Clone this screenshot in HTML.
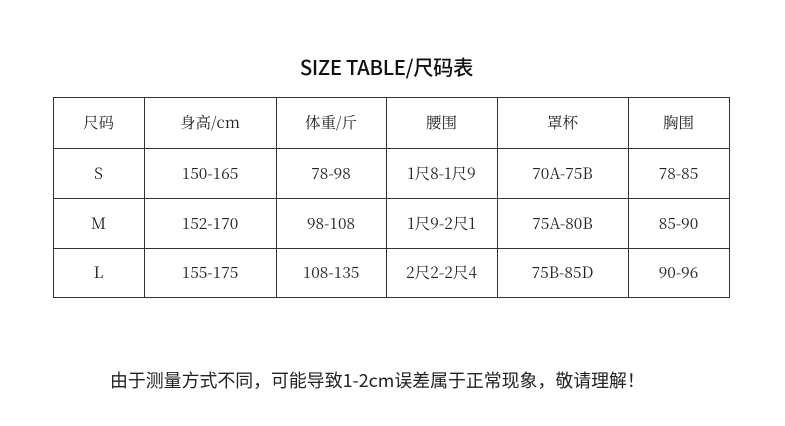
<!DOCTYPE html><html><head><meta charset="utf-8"><style>
body{margin:0;width:785px;height:426px;background:#fff;position:relative;overflow:hidden}
.t{position:absolute;top:51px;left:-6px;width:785px;text-align:center;font:500 20.3px "Noto Sans CJK SC",sans-serif;color:#111;letter-spacing:-0.3px}
.h{position:absolute;background:#333}
.c{position:absolute;text-align:center;font:15.5px "Noto Serif CJK SC",serif;color:#222}
.f{position:absolute;left:110px;top:367px;font:17.9px "Noto Sans CJK SC",sans-serif;color:#222;line-height:26px}
</style></head><body>
<div class="t">SIZE TABLE/尺码表</div>
<div class="h" style="left:53px;top:97px;width:677px;height:1px"></div>
<div class="h" style="left:53px;top:148px;width:677px;height:1px"></div>
<div class="h" style="left:53px;top:198px;width:677px;height:1px"></div>
<div class="h" style="left:53px;top:248px;width:677px;height:1px"></div>
<div class="h" style="left:53px;top:297px;width:677px;height:1px"></div>
<div class="h" style="left:53px;top:97px;width:1px;height:201px"></div>
<div class="h" style="left:144px;top:97px;width:1px;height:201px"></div>
<div class="h" style="left:276px;top:97px;width:1px;height:201px"></div>
<div class="h" style="left:386px;top:97px;width:1px;height:201px"></div>
<div class="h" style="left:497px;top:97px;width:1px;height:201px"></div>
<div class="h" style="left:628px;top:97px;width:1px;height:201px"></div>
<div class="h" style="left:729px;top:97px;width:1px;height:201px"></div>
<div id="g"></div>
<script>
var cols=[53,144,276,386,497,628,729],rows=[[97,148],[148,198],[198,248],[248,297]];
var d=[["尺码","身高/cm","体重/斤","腰围","罩杯","胸围"],["S","150-165","78-98","1尺8-1尺9","70A-75B","78-85"],["M","152-170","98-108","1尺9-2尺1","75A-80B","85-90"],["L","155-175","108-135","2尺2-2尺4","75B-85D","90-96"]];
var h="";for(var r=0;r<4;r++)for(var c=0;c<6;c++){h+='<div class="c" style="left:'+cols[c]+'px;width:'+(cols[c+1]-cols[c])+'px;top:'+rows[r][0]+'px;height:'+(rows[r][1]-rows[r][0])+'px;line-height:'+(rows[r][1]-rows[r][0])+'px">'+d[r][c]+'</div>';}
document.getElementById("g").innerHTML=h;
</script>
<div class="f">由于测量方式不同，可能导致1-2cm误差属于正常现象，敬请理解！</div>
</body></html>
